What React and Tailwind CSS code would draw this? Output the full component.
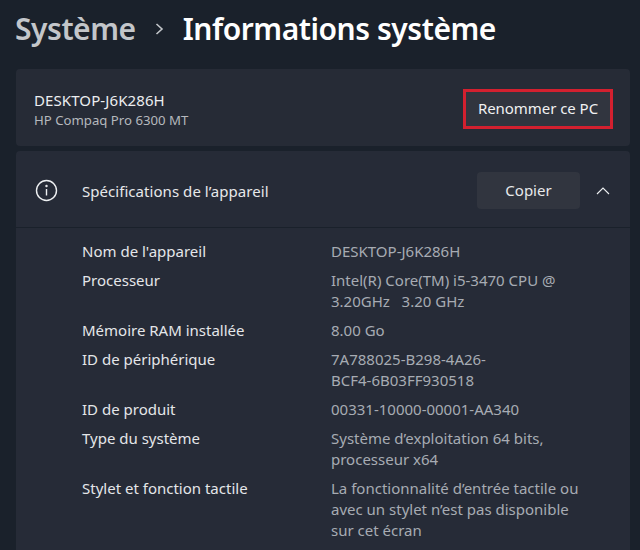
const rows = [
  ["Nom de l'appareil", ["DESKTOP-J6K286H"]],
  ["Processeur", ["Intel(R) Core(TM) i5-3470 CPU @", "3.20GHz\u00a0\u00a0\u00a03.20 GHz"]],
  ["Mémoire RAM installée", ["8.00 Go"]],
  ["ID de périphérique", ["7A788025-B298-4A26-", "BCF4-6B03FF930518"]],
  ["ID de produit", ["00331-10000-00001-AA340"]],
  ["Type du système", ["Système d’exploitation 64 bits,", "processeur x64"]],
  ["Stylet et fonction tactile", ["La fonctionnalité d’entrée tactile ou", "avec un stylet n’est pas disponible", "sur cet écran"]],
];

export default function App() {
  return (
    <div className="w-[640px] h-[550px] overflow-hidden bg-[#1a212b] font-['Noto_Sans','Open_Sans',sans-serif] text-[15px] text-[#e6e8ea]">
      <header className="flex items-center h-[69px] pl-[15px] pb-[11px] text-[30px] leading-[40px] font-semibold tracking-[-0.45px]">
        <span className="text-[#c3c6ca]">Système</span>
        <svg className="ml-[18px] mr-[18px] w-[11px] h-[14px]" viewBox="0 0 11 14" fill="none" stroke="#c3c6ca" strokeWidth="1.6">
          <path d="M2.5 2 L8 7 L2.5 12" />
        </svg>
        <span className="text-white">Informations système</span>
      </header>

      <section className="flex items-center justify-between ml-4 mr-[10px] h-[77px] pl-[18px] pr-[17px] bg-[#262b36] rounded-[4px]">
        <div className="pt-[4px]">
          <div className="text-[15px] leading-[20px] tracking-[0.1px] text-[#eceef0]">DESKTOP-J6K286H</div>
          <div className="mt-[1px] text-[13.2px] leading-[19px] text-[#b5b8bd]">HP Compaq Pro 6300 MT</div>
        </div>
        <button className="flex items-center justify-center w-[150px] h-[40px] mt-[2px] border-[3px] border-[#d3202f] bg-[#31353f] text-[15px] tracking-[-0.05px] text-[#f0f1f2]">
          Renommer ce PC
        </button>
      </section>

      <section className="ml-4 mr-[10px] mt-[5px] h-[399px] bg-[#262b37] rounded-t-[4px]">
        <div className="flex items-center h-[77px] border-b border-[#1a212b] pt-[2px] pl-[19px] pr-[20px]">
          <svg className="w-[23px] h-[23px]" viewBox="0 0 23 23" fill="none" stroke="#eef0f2" strokeWidth="1.4">
            <circle cx="11.5" cy="11.5" r="10" />
            <path d="M11.5 10 V16.5" />
            <circle cx="11.5" cy="7" r="0.5" fill="#eef0f2" />
          </svg>
          <div className="ml-[24px] flex-1 pt-[2px] text-[15px] tracking-[0.05px] text-[#e6e8ea]">Spécifications de l’appareil</div>
          <button className="flex items-center justify-center w-[103px] h-[37px] rounded-[4px] bg-[#31353f] text-[15px] text-[#e8e9eb]">
            Copier
          </button>
          <svg className="ml-[16px] w-[14px] h-[9px]" viewBox="0 0 14 9" fill="none" stroke="#eef0f2" strokeWidth="1.1">
            <path d="M1 8 L7 2 L13 8" />
          </svg>
        </div>
        <dl className="grid grid-cols-[249px_1fr] gap-y-[8px] pt-[13px] pl-[66px] text-[15px] leading-[21px]">
          {rows.map(([label, lines]) => (
            <div key={label} className="contents">
              <dt className="text-[#e4e6e9]">{label}</dt>
              <dd className="text-[#a7abb3]">
                {lines.map((l) => (
                  <div key={l}>{l}</div>
                ))}
              </dd>
            </div>
          ))}
        </dl>
      </section>
    </div>
  );
}
